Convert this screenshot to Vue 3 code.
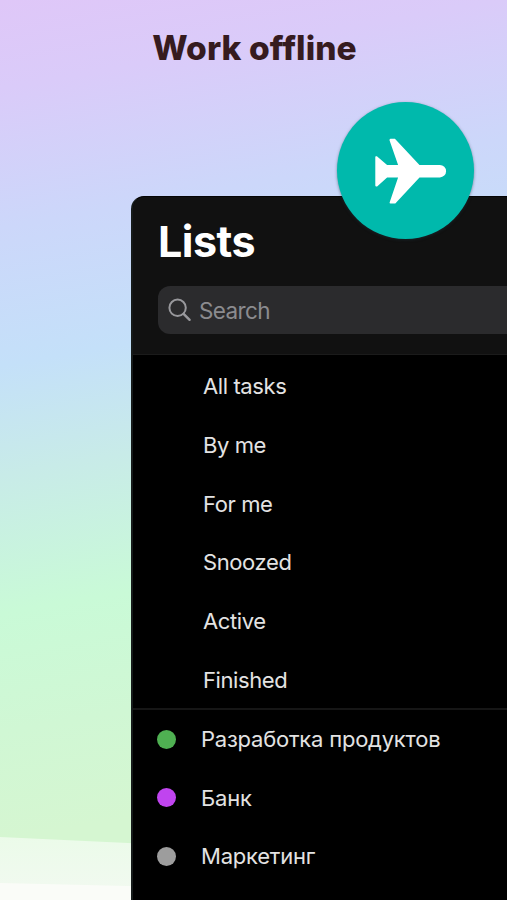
<script setup>
import { ref } from 'vue'

const filtros = ref(['All tasks', 'By me', 'For me', 'Snoozed', 'Active', 'Finished'])

const projetos = ref([
  { nome: 'Разработка продуктов', cor: 'verde' },
  { nome: 'Банк', cor: 'roxo' },
  { nome: 'Маркетинг', cor: 'cinza' }
])
</script>

<template>
  <div class="tela">
    <h1 class="titulo"><span>Work offline</span></h1>

    <div class="painel">
      <header class="topo">
        <h2><span>Lists</span></h2>
        <div class="busca">
          <svg width="24" height="24" viewBox="0 0 24 24" fill="none" stroke="#98989c" stroke-width="2">
            <circle cx="9.6" cy="9.8" r="8.2" />
            <path d="M15.6 15.8l6 6" stroke-width="2.4" stroke-linecap="round" />
          </svg>
          <span>Search</span>
        </div>
      </header>

      <ul class="filtros">
        <li v-for="f in filtros" :key="f"><span>{{ f }}</span></li>
      </ul>

      <ul class="projetos">
        <li v-for="p in projetos" :key="p.nome">
          <i :class="p.cor"></i>
          <span>{{ p.nome }}</span>
        </li>
      </ul>
    </div>

    <div class="selo">
      <svg width="137" height="137" viewBox="0 0 137 137">
        <path
          fill="#fff"
          d="M38.3 54.8Q38.3 53.8 39.9 54.3L50.1 63H61.1L52.5 38.2Q52.5 36.8 53.7 36.8H57.9L82.5 63H102.9A6.2 6.2 0 0 1 102.9 75.4H82.5L58.3 101.6H53.5Q52.4 101.4 52.6 100.4L61.1 75.4H50.1L40.1 84.4Q38.3 84.8 38.3 83.4Z"
        />
      </svg>
    </div>
  </div>
</template>

<style>
html,
body {
  margin: 0;
  overflow: hidden;
}
</style>

<style scoped>
.tela {
  position: relative;
  width: 507px;
  height: 900px;
  overflow: hidden;
  font-family: Inter, "Liberation Sans", sans-serif;
  background: linear-gradient(170deg, #dfc7f8 0%, #dacbf9 9%, #ccd7fa 23%, #c4e0f9 37%, #c8ebe8 48%, #c9fad7 62%, #d0f7d4 74%, #d5f6d1 85%);
}
/* faixas claras no rodape */
.tela::before,
.tela::after {
  content: "";
  position: absolute;
  left: 0;
  bottom: 0;
  width: 100%;
}
.tela::before {
  height: 64px;
  background: linear-gradient(#ebfbe9, #f2f9f1);
  clip-path: polygon(0 1px, 100% 25px, 100% 100%, 0 100%);
}
.tela::after {
  height: 18px;
  background: #fafcf8;
  clip-path: polygon(0 1px, 100% 13px, 100% 100%, 0 100%);
}
.titulo {
  margin: 0;
  height: 196px;
  padding-top: 28px;
  padding-left: 2px;
  box-sizing: border-box;
  text-align: center;
  color: #361b1f;
  font-size: 33.5px;
  line-height: 40px;
  font-weight: 800;
  letter-spacing: 0.1px;
  font-variant-ligatures: none;
}
.painel {
  position: relative;
  z-index: 1;
  margin-left: 131px;
  height: 704px;
  box-sizing: border-box;
  border-left: 2px solid #161b1b;
  border-top: 1px solid #050505;
  border-top-left-radius: 13px;
  background: #000;
  overflow: hidden;
}
.topo {
  height: 158px;
  box-sizing: border-box;
  padding: 18px 0 0 25px;
  background: #111;
  border-bottom: 1px solid #1b1b1b;
}
h2 {
  margin: 0;
  color: #fff;
  font-size: 43px;
  line-height: 52px;
  font-weight: 700;
  letter-spacing: -0.5px;
}
.busca {
  display: flex;
  align-items: center;
  gap: 7px;
  margin-top: 19px;
  height: 48px;
  padding-left: 10px;
  border-radius: 12px 0 0 12px;
  background: #2b2b2d;
  color: #8b8b8f;
  font-size: 22.5px;
  letter-spacing: -0.6px;
}
ul {
  margin: 0;
  padding: 0;
  list-style: none;
}
li {
  display: flex;
  align-items: center;
  height: 58.7px;
  color: #e3e3e3;
  font-size: 22px;
  letter-spacing: -0.4px;
}
.filtros {
  padding: 2px 0 0 70px;
  height: 355px;
  box-sizing: border-box;
  border-bottom: 2px solid #161616;
}
.projetos {
  padding-left: 24px;
}
.projetos li {
  height: 58.5px;
  letter-spacing: -0.22px;
}
.projetos i {
  width: 19px;
  height: 19px;
  margin-right: 25px;
  border-radius: 50%;
}
.verde {
  background: #4fb052;
}
.roxo {
  background: #c044ef;
}
.cinza {
  background: #9d9d9d;
}
.selo {
  position: absolute;
  z-index: 2;
  left: 336.5px;
  top: 101.5px;
  width: 137px;
  height: 137px;
  border-radius: 50%;
  background: #00b9ac;
  box-shadow: 0 1px 3px rgba(30, 50, 60, 0.5);
}
.selo svg {
  display: block;
}
</style>
